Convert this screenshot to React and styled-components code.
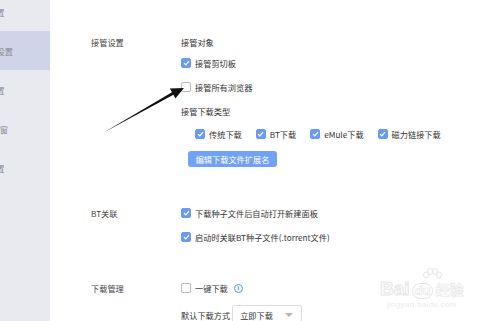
import React from "react";
import styled, { createGlobalStyle } from "styled-components";

const GlobalStyle = createGlobalStyle`
  html, body {
    margin: 0;
    padding: 0;
    background: #ffffff;
  }
  body {
    font-family: "Noto Sans CJK SC", "Noto Sans", "Liberation Sans", sans-serif;
    color: #333;
  }
`;

const sideItems = [
  { text: "常规设置", end: 4.5 },
  { text: "接管设置", end: 13, active: true },
  { text: "下载设置", end: 4.5 },
  { text: "悬浮窗", end: 8 },
  { text: "高级设置", end: 4.5 },
];

const Page = styled.div`
  position: relative;
  display: flex;
  width: 500px;
  height: 321px;
  overflow: hidden;
  background: #fff;
`;

const Sidebar = styled.div`
  width: 50px;
  flex-shrink: 0;
  background: #e9e9f0;
  margin-top: -8px;
  display: flex;
  flex-direction: column;
  overflow: hidden;
`;

const SideItem = styled.div`
  height: 39px;
  display: flex;
  align-items: center;
  justify-content: flex-end;
  padding-right: ${(p) => 50 - p.$end}px;
  background: ${(p) => (p.$active ? "#cfd4e8" : "transparent")};
  font-size: 8.2px;
  color: #8a8a95;
  white-space: nowrap;
`;

const Main = styled.div`
  flex: 1;
  padding: 36px 0 0 41px;
  display: flex;
  flex-direction: column;
`;

const Section = styled.div`
  display: flex;
  margin-top: ${(p) => p.$mt || 0}px;
`;

const Label = styled.div`
  width: 90px;
  flex-shrink: 0;
  font-size: 8.2px;
  line-height: 12px;
  height: 12px;
  color: #444;
`;

const Column = styled.div`
  display: flex;
  flex-direction: column;
`;

const Row = styled.div`
  display: flex;
  align-items: center;
  height: 12px;
  font-size: 8.2px;
  line-height: 12px;
  color: #333;
  white-space: nowrap;
  margin-top: ${(p) => p.$mt || 0}px;
  padding-left: ${(p) => p.$indent || 0}px;
  gap: ${(p) => p.$gap || 0}px;
`;

const Check = styled.span`
  width: 10px;
  height: 10px;
  box-sizing: border-box;
  border-radius: 2px;
  flex-shrink: 0;
  display: inline-flex;
  align-items: center;
  justify-content: center;
  background: ${(p) => (p.$on ? "#6a9bf4" : "#fff")};
  border: 1px solid ${(p) => (p.$on ? "#6a9bf4" : "#b9b9bf")};
`;

const Option = styled.span`
  display: inline-flex;
  align-items: center;
  gap: 4px;
`;

const Button = styled.button`
  margin: 11px 0 0 7px;
  align-self: flex-start;
  width: 89px;
  height: 16px;
  padding: 0;
  border: none;
  border-radius: 3px;
  background: #72a2f6;
  color: #fff;
  font-family: inherit;
  font-size: 8.2px;
  line-height: 16px;
`;

const Info = styled.span`
  width: 9px;
  height: 9px;
  box-sizing: border-box;
  border-radius: 50%;
  border: 1px solid #5b8ff0;
  color: #5b8ff0;
  font-family: "Liberation Serif", serif;
  font-size: 7px;
  font-weight: bold;
  line-height: 7px;
  text-align: center;
  margin-left: 6px;
`;

const SelectRow = styled.div`
  display: flex;
  align-items: center;
  margin-top: 11px;
  font-size: 8.2px;
  color: #333;
  gap: 2px;
`;

const Select = styled.div`
  width: 70px;
  height: 20px;
  box-sizing: border-box;
  border: 1px solid #dcdcdc;
  border-radius: 2px;
  display: flex;
  align-items: center;
  justify-content: space-between;
  padding: 0 8px 0 7px;
  font-size: 8.2px;
`;

const Caret = styled.span`
  width: 0;
  height: 0;
  border-left: 4px solid transparent;
  border-right: 4px solid transparent;
  border-top: 4px solid #b5b5b5;
`;

const Arrow = styled.svg`
  position: absolute;
  left: 0;
  top: 0;
  pointer-events: none;
`;

const Watermark = styled.div`
  position: absolute;
  left: 380px;
  top: 268px;
  display: flex;
  flex-direction: column;
  align-items: center;
`;

const LogoLine = styled.div`
  display: flex;
  align-items: flex-end;
  font-family: "Liberation Sans", sans-serif;
  font-weight: bold;
  font-size: 19px;
  line-height: 20px;
  color: #fff;
  -webkit-text-stroke: 1px #e6e6e6;
`;

const DuBox = styled.span`
  font-size: 13px;
  line-height: 14px;
  padding: 0 2px;
  margin: 0 2px;
  border: 1px solid #e6e6e6;
  border-radius: 8px;
  -webkit-text-stroke: 0.6px #e6e6e6;
`;

const Jing = styled.span`
  font-family: "Noto Sans CJK SC", sans-serif;
  font-size: 14px;
  -webkit-text-stroke: 0.6px #e6e6e6;
`;

const Site = styled.div`
  font-family: "Liberation Sans", sans-serif;
  font-size: 8px;
  color: #ebebeb;
  margin-top: 1px;
  letter-spacing: 0.3px;
`;

const Tick = () => (
  <svg width="7" height="6" viewBox="0 0 7 6">
    <path d="M1 3.1 L2.8 4.8 L6 1.2" fill="none" stroke="#fff" strokeWidth="1.2" />
  </svg>
);

const Box = ({ on, children }) => (
  <Option>
    <Check $on={on}>{on && <Tick />}</Check>
    {children}
  </Option>
);

export default function App() {
  return (
    <>
      <GlobalStyle />
      <Page>
        <Sidebar>
          {sideItems.map((it) => (
            <SideItem key={it.text} $end={it.end} $active={it.active}>
              {it.text}
            </SideItem>
          ))}
        </Sidebar>
        <Main>
          <Section>
            <Label>接管设置</Label>
            <Column>
              <Row>接管对象</Row>
              <Row $mt={9}>
                <Box on>接管剪切板</Box>
              </Row>
              <Row $mt={12}>
                <Box>接管所有浏览器</Box>
              </Row>
              <Row $mt={12}>接管下载类型</Row>
              <Row $mt={11} $indent={14} $gap={14}>
                <Box on>传统下载</Box>
                <Box on>BT下载</Box>
                <Box on>eMule下载</Box>
                <Box on>磁力链接下载</Box>
              </Row>
              <Button>编辑下载文件扩展名</Button>
            </Column>
          </Section>
          <Section $mt={40}>
            <Label>BT关联</Label>
            <Column>
              <Row>
                <Box on>下载种子文件后自动打开新建面板</Box>
              </Row>
              <Row $mt={12}>
                <Box on>启动时关联BT种子文件(.torrent文件)</Box>
              </Row>
            </Column>
          </Section>
          <Section $mt={39}>
            <Label>下载管理</Label>
            <Column>
              <Row>
                <Box>一键下载</Box>
                <Info>i</Info>
              </Row>
              <SelectRow>
                默认下载方式
                <Select>
                  立即下载
                  <Caret />
                </Select>
              </SelectRow>
            </Column>
          </Section>
        </Main>
        <Arrow width="500" height="321" viewBox="0 0 500 321">
          <polygon
            points="102,133.5 172,92.3 169.8,88.6 184,88 175.4,98.5 173.4,94.8"
            fill="#111"
          />
        </Arrow>
        <Watermark>
          <svg width="24" height="14" viewBox="0 0 24 14" style={{ marginLeft: 20, marginBottom: -3 }}>
            <g fill="none" stroke="#e6e6e6" strokeWidth="1">
              <ellipse cx="6" cy="7" rx="2.5" ry="3" />
              <ellipse cx="10" cy="3.5" rx="2.5" ry="3" />
              <ellipse cx="15" cy="3.5" rx="2.5" ry="3" />
              <ellipse cx="19" cy="7" rx="2.5" ry="3" />
            </g>
          </svg>
          <LogoLine>
            Bai<DuBox>du</DuBox>
            <Jing>经验</Jing>
          </LogoLine>
          <Site>jingyan.baidu.com</Site>
        </Watermark>
      </Page>
    </>
  );
}
